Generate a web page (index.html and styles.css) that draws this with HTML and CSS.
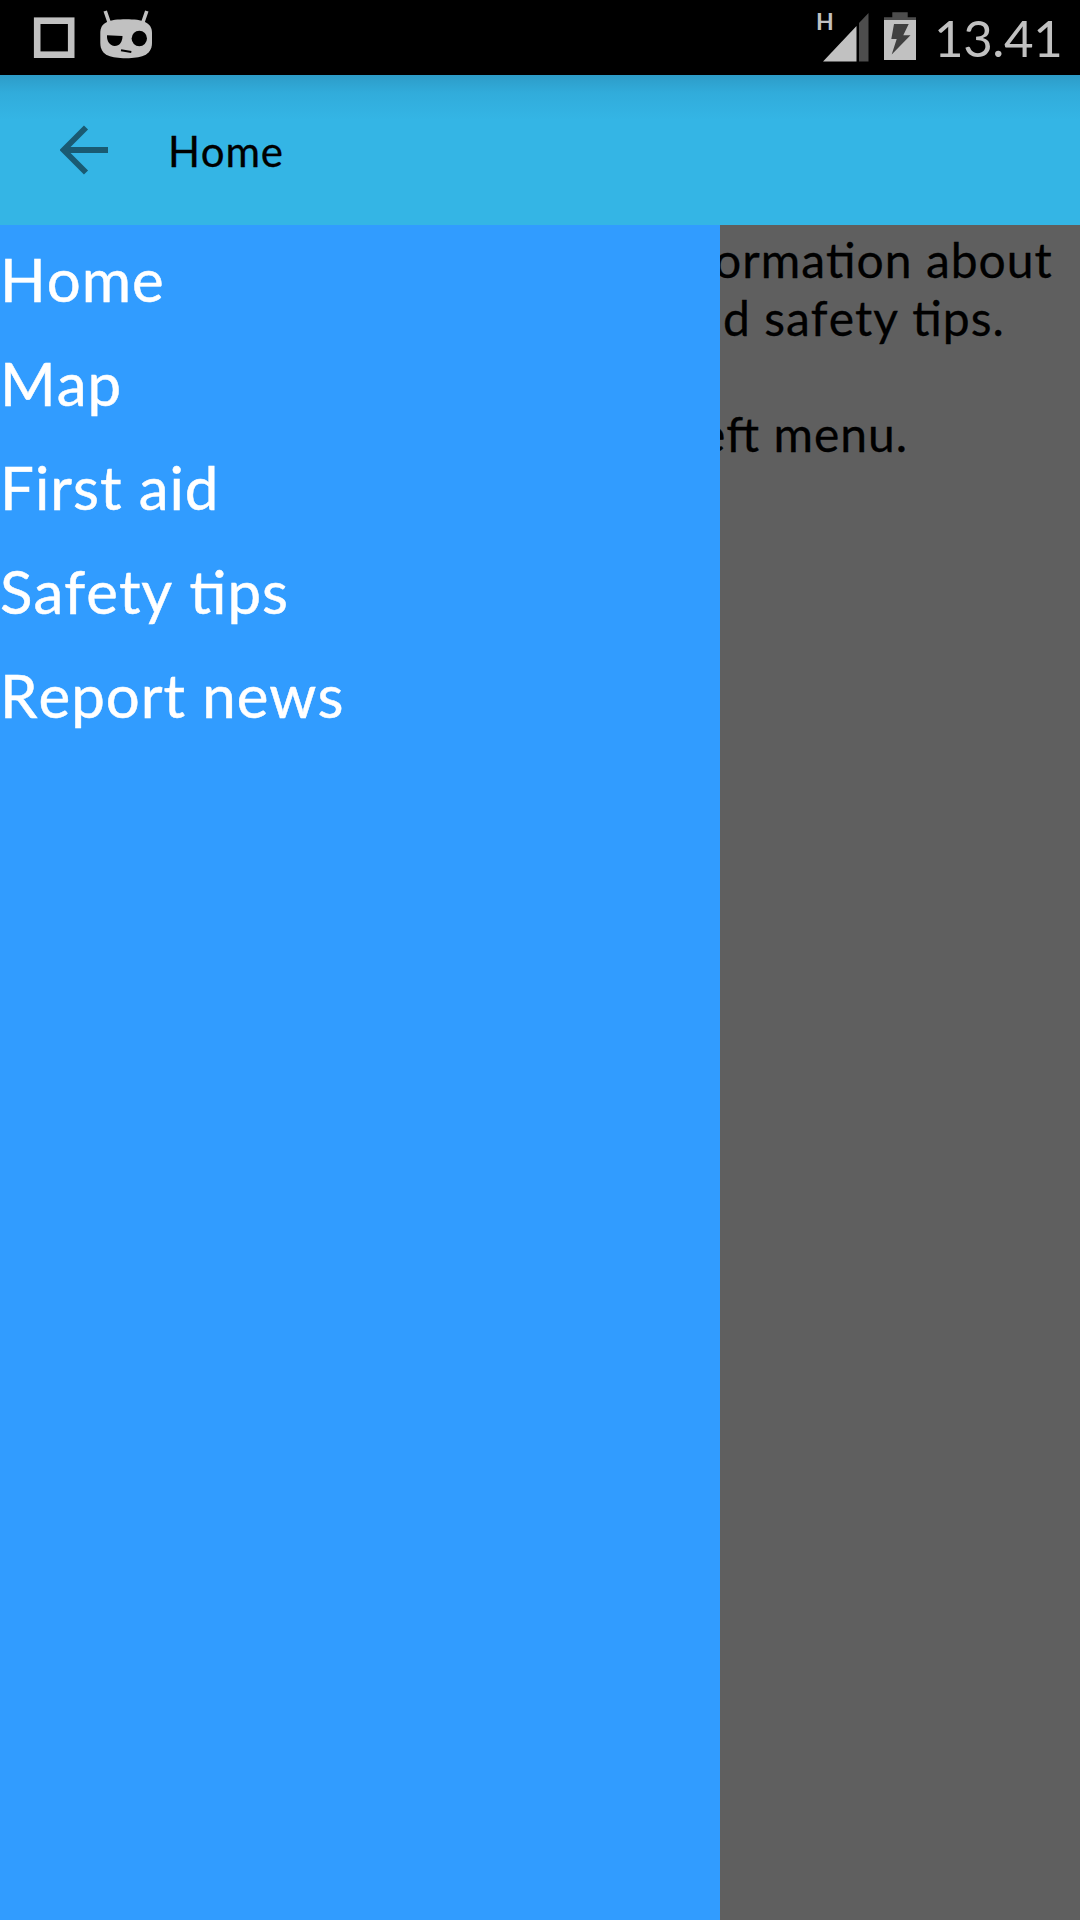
FILE: index.html
```html
<!DOCTYPE html>
<html lang="en">
<head>
<meta charset="utf-8">
<title>Home</title>
<link rel="stylesheet" href="styles.css">
</head>
<body>
<div class="screen">
  <header class="status">
    <svg class="status-left" width="160" height="75" viewBox="0 0 160 75">
      <rect x="37.2" y="20.7" width="34" height="34" fill="none" stroke="#c1c1c1" stroke-width="6.6"/>
      <path d="M105.200 11L109 22M146.800 11L143 22" stroke="#c1c1c1" stroke-width="3.600" fill="none"/>
      <path d="M126 19.300C134 19.300 141 20 145 22C150 24.500 152 28 152 33V43C152 49 149 53.500 144 55.500C139 57.500 134 58.200 126 58.200S113 57.500 108 55.500C103 53.500 100.300 49 100.300 43V33C100.300 28 102 24.500 107 22C111 20 118 19.300 126 19.300Z" fill="#c1c1c1"/>
      <path d="M107 35.300L122.500 36C122.500 42 119.500 46 114.700 46S106.500 41 107 35.300Z" fill="#000"/>
      <circle cx="139.300" cy="38.500" r="7.700" fill="#000"/>
      <path d="M121 50.300L131.300 52" stroke="#000" stroke-width="2"/>
    </svg>
    <div class="status-right">
      <span class="network">H</span>
      <svg class="signal" width="46" height="75" viewBox="0 0 46 75">
        <path d="M0 61.500L33.500 26V61.500Z" fill="#c1c1c1"/>
        <path d="M36 61.500V23L45.500 13V61.500Z" fill="#4d4d4d"/>
      </svg>
      <svg class="battery" width="32" height="75" viewBox="0 0 32 75">
        <path d="M0 20V17.300H8.300V12.300H23.700V17.300H32V20Z" fill="#4d4d4d"/>
        <path d="M0 20H32V60H0Z" fill="#c1c1c1"/>
        <path d="M10 24H24.700L19.300 35.300H26.500L7.700 54.500L12.700 39H7.300Z" fill="#404040"/>
      </svg>
      <span class="clock">13.41</span>
    </div>
  </header>
  <div class="bar">
    <svg class="back" width="48" height="50" viewBox="0 0 48 50"><path d="M48 25H5M26 2.500L3.500 25L26 47.500" fill="none" stroke="#1a5a72" stroke-width="5.800"/></svg>
    <h1 class="title">Home</h1>
  </div>
  <div class="content">
    <nav class="drawer">
      <a class="item">Home</a>
      <a class="item">Map</a>
      <a class="item">First aid</a>
      <a class="item">Safety tips</a>
      <a class="item">Report news</a>
    </nav>
    <main class="page">
      <p class="line first">ormation about</p>
      <p class="line second">d safety tips.</p>
      <p class="line third">eft menu.</p>
    </main>
  </div>
</div>
</body>
</html>
```
FILE: styles.css
```css
* { box-sizing: border-box; }
body { margin: 0; font-family: Lato, Carlito, sans-serif; font-kerning: none; font-feature-settings: "liga" 1, "kern" 0; }
.screen { width: 1080px; height: 1920px; display: flex; flex-direction: column; overflow: hidden; }
.status { height: 75px; background: #000; color: #c1c1c1; display: flex; justify-content: space-between; }
.status-right { width: 264px; display: flex; align-items: flex-start; }
.network { width: 7px; font-size: 23px; font-weight: 700; line-height: 43px; }
.signal { margin-right: 15px; }
.battery { margin-right: 18px; }
.clock { font-size: 51px; line-height: 76px; letter-spacing: -0.4px; }
.bar { height: 150px; background: linear-gradient(#2d9cc8, #31acdb 18px, #34b5e5 45px); display: flex; align-items: center; padding-left: 60px; }
.back { margin-right: 60px; }
.title { margin: 1px 0 0; font-size: 42px; font-weight: 400; line-height: 48px; color: #000; letter-spacing: 0.8px; -webkit-text-stroke: 0.3px; }
.content { flex: 1; display: flex; }
.drawer { width: 720px; background: #319cff; color: #fff; display: flex; flex-direction: column; padding-top: 2px; letter-spacing: 0.95px; -webkit-text-stroke: 0.5px; }
.item { font-size: 60px; line-height: 104px; white-space: nowrap; }
.page { width: 360px; background: #5f5f5f; color: #000; overflow: hidden; padding-top: 6px; font-size: 48px; line-height: 58px; letter-spacing: 1px; -webkit-text-stroke: 0.3px; }
.line { margin: 0; white-space: nowrap; }
.first { margin-left: -6px; }
.second { margin-left: 3px; }
.third { margin-top: 58px; margin-left: -20px; }
```
